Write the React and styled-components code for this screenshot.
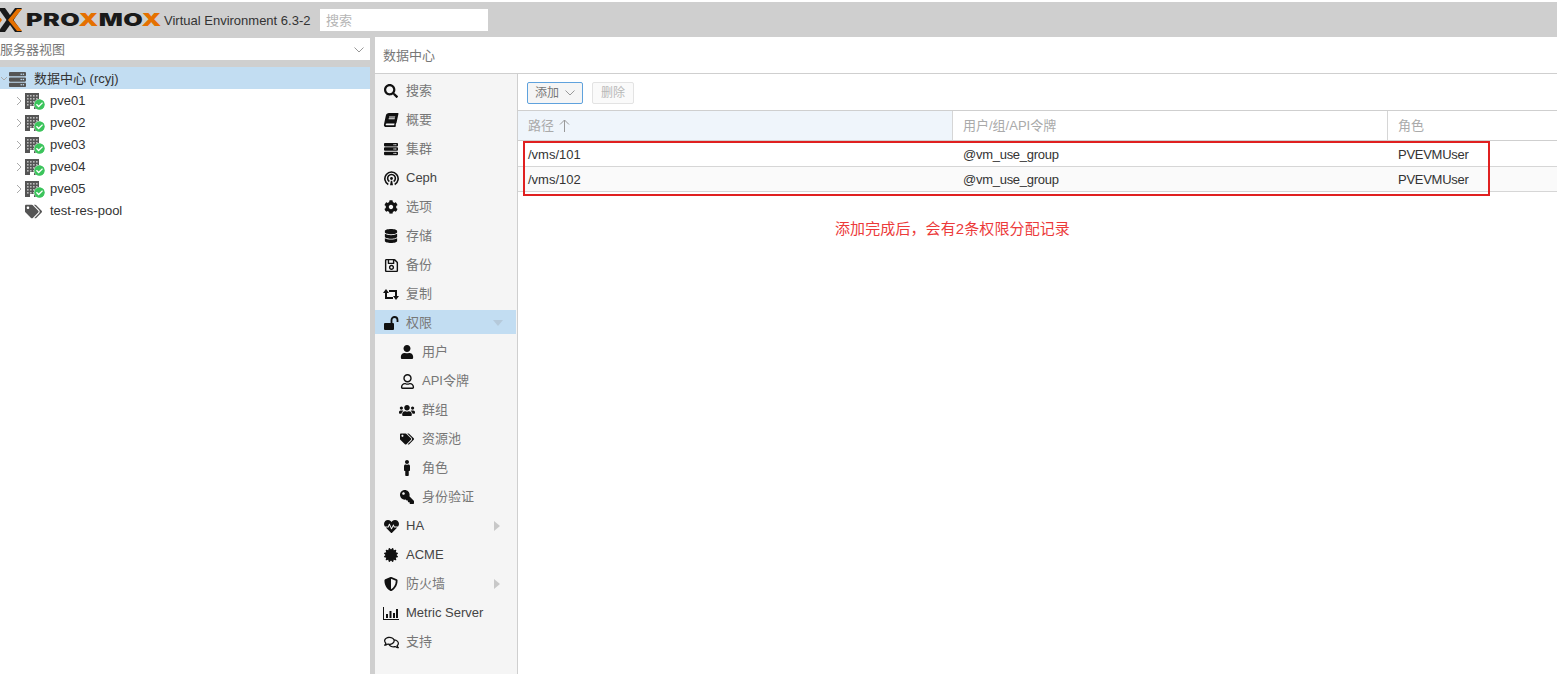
import React from "react";
import styled, { createGlobalStyle } from "styled-components";
import {
  FaSearch, FaBook, FaServer, FaCog, FaDatabase, FaRegSave, FaUser, FaRegUser,
  FaUsers, FaTags, FaMale, FaKey, FaHeartbeat, FaCertificate, FaShieldAlt, FaRegComments,
  FaCheckCircle,
} from "react-icons/fa";

const GlobalStyle = createGlobalStyle`
  html, body { margin: 0; padding: 0; background: #fff; overflow: hidden; }
  body { font-family: "Liberation Sans", "Noto Sans CJK SC", sans-serif; font-size: 13px; line-height: 16px; color: #333; }
  * { box-sizing: border-box; }
`;

const Page = styled.div`
  width: 1557px;
  height: 674px;
  padding-top: 2px;
  display: flex;
  flex-direction: column;
  overflow: hidden;
  position: relative;
`;
const TopBar = styled.div`
  height: 35px;
  flex: none;
  background: #cfcfcf;
  display: flex;
  align-items: center;
`;
const LogoMark = styled.svg`
  width: 24px;
  height: 24px;
  flex: none;
  margin-left: -2px;
`;
const WordMark = styled.div`
  font-family: Inter, "Liberation Sans", sans-serif;
  font-weight: 900;
  font-size: 17px;
  letter-spacing: 0.3px;
  color: #1a1a1a;
  margin-left: 4px;
  width: 138px;
  white-space: nowrap;
  transform: scaleX(1.48);
  transform-origin: left center;
`;
const OrangeX = styled.span`
  color: #e57000;
`;
const Version = styled.div`
  color: #333;
  width: 156px;
  padding-top: 2px;
  white-space: nowrap;
`;
const SearchBox = styled.div`
  width: 168px;
  height: 22px;
  background: #fff;
  color: #b5b5b5;
  padding: 0 6px;
  line-height: 24px;
`;
const Body = styled.div`
  flex: 1;
  display: flex;
  min-height: 0;
`;
const LeftPanel = styled.div`
  width: 370px;
  flex: none;
  display: flex;
  flex-direction: column;
  padding-top: 1px;
  background: #cfcfcf;
`;
const ViewSelect = styled.div`
  height: 22px;
  background: #fff;
  color: #777;
  display: flex;
  justify-content: space-between;
  align-items: center;
  padding: 2px 6px 0 0;
  margin-bottom: 7px;
`;
const Tree = styled.div`
  flex: 1;
  background: #fff;
`;
const TreeRow = styled.div`
  height: 22px;
  display: flex;
  align-items: center;
  padding: 2px 0 0 ${(p) => p.$indent}px;
  background: ${(p) => (p.$selected ? "#c2ddf2" : "transparent")};
  color: #333;
`;
const Chevron = styled.svg`
  width: 8px;
  height: 10px;
  flex: none;
  fill: none;
  stroke: #aaa;
  stroke-width: 1;
`;
const NodeIcon = styled.span`
  position: relative;
  width: 20px;
  height: 18px;
  flex: none;
  margin: 0 5px 0 ${(p) => p.$gap}px;
  color: #555;
  display: flex;
  align-items: center;
  font-size: ${(p) => p.$size}px;
`;
const Badge = styled(FaCheckCircle)`
  position: absolute;
  right: 0;
  bottom: 0;
  width: 11px;
  height: 11px;
  color: #3cc45c;
  background: #fff;
  border-radius: 50%;
`;
const Splitter = styled.div`
  width: 5px;
  flex: none;
  background: #cfcfcf;
`;
const Main = styled.div`
  flex: 1;
  display: flex;
  flex-direction: column;
  min-width: 0;
  padding-top: 1px;
`;
const Title = styled.div`
  height: 36px;
  flex: none;
  padding: 0 8px;
  line-height: 36px;
  color: #777;
  border-bottom: 1px solid #cfcfcf;
`;
const Content = styled.div`
  flex: 1;
  display: flex;
  min-height: 0;
`;
const Sidebar = styled.div`
  width: 143px;
  flex: none;
  background: #f5f5f5;
  border-right: 1px solid #cfcfcf;
  padding-top: 4px;
  display: flex;
  flex-direction: column;
  gap: 5px;
`;
const NavItem = styled.div`
  height: 24px;
  flex: none;
  margin-right: 1px;
  display: flex;
  align-items: center;
  padding-top: 2px;
  padding-left: ${(p) => (p.$sub ? 24 : 8)}px;
  background: ${(p) => (p.$active ? "#c2ddf2" : "transparent")};
  color: ${(p) => (p.$latin ? "#444" : "#777")};
`;
const NavIcon = styled.span`
  width: 16px;
  height: 16px;
  flex: none;
  display: flex;
  align-items: center;
  justify-content: center;
  color: #111;
  font-size: ${(p) => p.$size || 14}px;
  margin-right: 7px;
`;
const NavLabel = styled.span`
  flex: 1;
  white-space: nowrap;
`;
const Caret = styled.span`
  width: 0;
  height: 0;
  flex: none;
  margin-right: ${(p) => (p.$open ? 13 : 16)}px;
  border-style: solid;
  border-color: transparent;
  border-width: ${(p) => (p.$open ? "6px 5px 0" : "5px 0 5px 6px")};
  ${(p) => (p.$open ? "border-top-color: #b5c9da;" : "border-left-color: #c8c8c8;")}
`;
const SlantedBook = styled(FaBook)`
  transform: skewX(-12deg);
`;
const FlippedKey = styled(FaKey)`
  transform: scaleX(-1);
`;
const Panel = styled.div`
  flex: 1;
  min-width: 0;
  display: flex;
  flex-direction: column;
`;
const Toolbar = styled.div`
  height: 36px;
  flex: none;
  display: flex;
  align-items: center;
  gap: 9px;
  padding: 2px 9px 0;
`;
const Button = styled.div`
  height: 22px;
  padding: 0 ${(p) => (p.$disabled ? 8 : 7)}px;
  display: flex;
  align-items: center;
  gap: 6px;
  border-radius: 2px;
  background: ${(p) => (p.$disabled ? "#fafafa" : "#f5f5f5")};
  border: 1px solid ${(p) => (p.$disabled ? "#e3e3e3" : "#5fa2dd")};
  color: ${(p) => (p.$disabled ? "#b8b8b8" : "#777")};
  font-size: 12px;
`;
const ButtonCaret = styled.svg`
  width: 10px;
  height: 6px;
  fill: none;
  stroke: #999;
  stroke-width: 1;
`;
const GridHead = styled.div`
  height: 31px;
  flex: none;
  display: grid;
  grid-template-columns: 435px 435px 1fr;
  border-top: 1px solid #cfcfcf;
  border-bottom: 1px solid #cfcfcf;
`;
const HeadCell = styled.div`
  padding-left: 10px;
  display: flex;
  align-items: center;
  gap: 5px;
  color: #aaa;
  background: ${(p) => (p.$sorted ? "#eff5fb" : "#fff")};
  border-right: 1px solid #d6d6d6;
  &:last-child { border-right: none; }
`;
const SortArrow = styled.svg`
  width: 11px;
  height: 13px;
  fill: none;
  stroke: #999;
  stroke-width: 1;
`;
const GridRow = styled.div`
  height: 25px;
  padding-top: 2px;
  display: grid;
  grid-template-columns: 435px 435px 1fr;
  align-items: center;
  background: ${(p) => (p.$alt ? "#fafafa" : "#fff")};
  border-bottom: 1px solid #d6d6d6;
  color: #333;
  ${GridHead} + & { height: 26px; padding-top: 3px; }
`;
const Cell = styled.div`
  padding-left: 10px;
  white-space: nowrap;
  letter-spacing: ${(p) => (p.$tight ? "-0.27px" : "0")};
`;
const Highlight = styled.div`
  position: absolute;
  left: 523px;
  top: 141px;
  width: 967px;
  height: 55px;
  border: 2px solid #e02020;
`;
const Note = styled.div`
  position: absolute;
  left: 835px;
  top: 219px;
  font-size: 15px;
  letter-spacing: 0.1px;
  line-height: 20px;
  color: #ec3a3a;
  white-space: nowrap;
`;

const BuildingIcon = () => (
  <svg width="14" height="16" viewBox="0 0 14 16">
    <rect width="14" height="16" fill="#555" />
    {[2, 5, 8, 11].map((y) =>
      [2, 5, 8, 11].map((x) => <rect key={`${x}-${y}`} x={x} y={y} width="1.6" height="1.6" fill="#bbb" />)
    )}
    <rect x="5" y="13" width="4" height="3" fill="#fff" />
  </svg>
);

const CephIcon = () => (
  <svg width="15" height="15" viewBox="0 0 14 14" fill="none" stroke="#111" strokeWidth="1.5">
    <path d="M4 12.6A6.2 6.2 0 1 1 10 12.6" />
    <path d="M5 9.8A3.6 3.6 0 1 1 9 9.8" />
    <circle cx="7" cy="7" r="1.3" fill="#111" stroke="none" />
    <path d="M5.6 13.4 6.4 9h1.2l.8 4.4" fill="#111" stroke="none" />
  </svg>
);

const RetweetIcon = () => (
  <svg width="16" height="13" viewBox="0 0 16 13" fill="none" stroke="#111" strokeWidth="2">
    <path d="M3 4v6h7" />
    <path d="M13 9V3H6" />
    <path d="M0 5h6L3 1z" fill="#111" stroke="none" />
    <path d="M10 8h6l-3 4z" fill="#111" stroke="none" />
  </svg>
);

const UnlockIcon = () => (
  <svg width="15" height="14" viewBox="0 0 15 14" fill="none" stroke="#111" strokeWidth="1.8">
    <rect x="0" y="7" width="10" height="7" rx="1" fill="#111" stroke="none" />
    <path d="M7.5 7V4a3 3 0 0 1 6 0v2" />
  </svg>
);

const MetricIcon = () => (
  <svg width="16" height="13" viewBox="0 0 16 13" fill="#111">
    <rect x="0" y="0" width="1" height="13" />
    <rect x="0" y="12" width="16" height="1" />
    <rect x="3" y="7" width="2" height="4" />
    <rect x="6.5" y="4" width="2" height="7" />
    <rect x="10" y="6" width="2" height="5" />
    <rect x="13" y="2" width="2" height="9" />
  </svg>
);

const navItems = [
  { label: "搜索", icon: <FaSearch /> },
  { label: "概要", icon: <SlantedBook /> },
  { label: "集群", icon: <FaServer /> },
  { label: "Ceph", icon: <CephIcon />, latin: true },
  { label: "选项", icon: <FaCog /> },
  { label: "存储", icon: <FaDatabase /> },
  { label: "备份", icon: <FaRegSave />, size: 15 },
  { label: "复制", icon: <RetweetIcon /> },
  { label: "权限", icon: <UnlockIcon />, active: true, caret: "open" },
  { label: "用户", icon: <FaUser />, sub: true },
  { label: "API令牌", icon: <FaRegUser />, sub: true, size: 15 },
  { label: "群组", icon: <FaUsers />, sub: true, size: 17 },
  { label: "资源池", icon: <FaTags />, sub: true },
  { label: "角色", icon: <FaMale />, sub: true, size: 16 },
  { label: "身份验证", icon: <FlippedKey />, sub: true },
  { label: "HA", icon: <FaHeartbeat />, caret: "closed", latin: true, size: 15 },
  { label: "ACME", icon: <FaCertificate />, latin: true },
  { label: "防火墙", icon: <FaShieldAlt />, caret: "closed" },
  { label: "Metric Server", icon: <MetricIcon />, latin: true },
  { label: "支持", icon: <FaRegComments />, size: 15 },
];

const nodes = ["pve01", "pve02", "pve03", "pve04", "pve05"];

const rows = [
  { path: "/vms/101", who: "@vm_use_group", role: "PVEVMUser" },
  { path: "/vms/102", who: "@vm_use_group", role: "PVEVMUser", alt: true },
];

export default function App() {
  return (
    <Page>
      <GlobalStyle />
      <TopBar>
        <LogoMark viewBox="0 0 24 24">
          <path d="M0 0h7l17 24h-7z" fill="#1a1a1a" />
          <path d="M0 24h7l17-24h-7z" fill="#1a1a1a" />
          <path d="M24 1h-5l-9 11 9 11h5l-9-11z" fill="#e57000" />
          <path d="M1 8l3 4-3 4z" fill="#e57000" />
        </LogoMark>
        <WordMark>PRO<OrangeX>X</OrangeX>MO<OrangeX>X</OrangeX></WordMark>
        <Version>Virtual Environment 6.3-2</Version>
        <SearchBox>搜索</SearchBox>
      </TopBar>
      <Body>
        <LeftPanel>
          <ViewSelect>
            服务器视图
            <ButtonCaret viewBox="0 0 10 6"><path d="M.5.5 5 5 9.5.5" /></ButtonCaret>
          </ViewSelect>
          <Tree>
            <TreeRow $selected $indent={0}>
              <Chevron viewBox="0 0 8 10"><path d="M1 3l3 3 3-3" /></Chevron>
              <NodeIcon $gap={1} $size={17}><FaServer /></NodeIcon>
              数据中心 (rcyj)
            </TreeRow>
            {nodes.map((n) => (
              <TreeRow key={n} $indent={15}>
                <Chevron viewBox="0 0 8 10"><path d="M2 1l4 4-4 4" /></Chevron>
                <NodeIcon $gap={2} $size={16}>
                  <BuildingIcon />
                  <Badge />
                </NodeIcon>
                {n}
              </TreeRow>
            ))}
            <TreeRow $indent={25}>
              <NodeIcon $gap={0} $size={17}><FaTags /></NodeIcon>
              test-res-pool
            </TreeRow>
          </Tree>
        </LeftPanel>
        <Splitter />
        <Main>
          <Title>数据中心</Title>
          <Content>
            <Sidebar>
              {navItems.map((item) => (
                <NavItem key={item.label} $sub={item.sub} $active={item.active} $latin={item.latin}>
                  <NavIcon $size={item.size}>{item.icon}</NavIcon>
                  <NavLabel>{item.label}</NavLabel>
                  {item.caret && <Caret $open={item.caret === "open"} />}
                </NavItem>
              ))}
            </Sidebar>
            <Panel>
              <Toolbar>
                <Button>
                  添加
                  <ButtonCaret viewBox="0 0 10 6"><path d="M.5.5 5 5 9.5.5" /></ButtonCaret>
                </Button>
                <Button $disabled>删除</Button>
              </Toolbar>
              <GridHead>
                <HeadCell $sorted>
                  路径
                  <SortArrow viewBox="0 0 11 13"><path d="M5.5 13V1M1 5.5 5.5 1 10 5.5" /></SortArrow>
                </HeadCell>
                <HeadCell>用户/组/API令牌</HeadCell>
                <HeadCell>角色</HeadCell>
              </GridHead>
              {rows.map((r) => (
                <GridRow key={r.path} $alt={r.alt}>
                  <Cell>{r.path}</Cell>
                  <Cell $tight>{r.who}</Cell>
                  <Cell $tight>{r.role}</Cell>
                </GridRow>
              ))}
            </Panel>
          </Content>
        </Main>
      </Body>
      <Highlight />
      <Note>添加完成后，会有2条权限分配记录</Note>
    </Page>
  );
}
